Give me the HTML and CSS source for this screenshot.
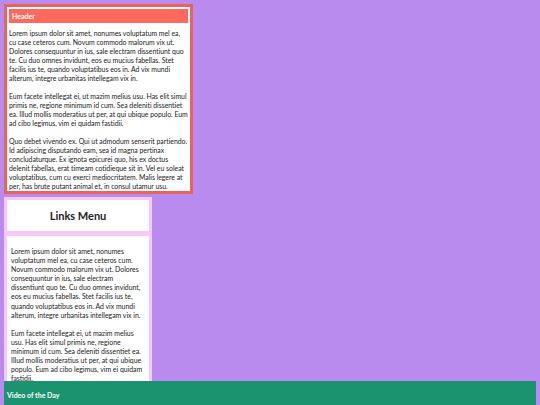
FILE: index.html
```html
<!DOCTYPE html>
<html>
<head>
<meta charset="utf-8">
<link rel="stylesheet" href="styles.css">
</head>
<body>
<div class="page">
  <section class="header-box">
    <div class="header-bar">Header</div>
    <p>Lorem ipsum dolor sit amet, nonumes voluptatum mel ea,<br>cu case ceteros cum. Novum commodo malorum vix ut.<br>Dolores consequuntur in ius, sale electram dissentiunt quo<br>te. Cu duo omnes invidunt, eos eu mucius fabellas. Stet<br>facilis ius te, quando voluptatibus eos in. Ad vix mundi<br>alterum, integre urbanitas intellegam vix in.</p>
    <p>Eum facete intellegat ei, ut mazim melius usu. Has elit simul<br>primis ne, regione minimum id cum. Sea deleniti dissentiet<br>ea. Illud mollis moderatius ut per, at qui ubique populo. Eum<br>ad cibo legimus, vim ei quidam fastidii.</p>
    <p>Quo debet vivendo ex. Qui ut admodum senserit partiendo.<br>Id adipiscing disputando eam, sea id magna pertinax<br>concludaturque. Ex ignota epicurei quo, his ex doctus<br>delenit fabellas, erat timeam cotidieque sit in. Vel eu soleat<br>voluptatibus, cum cu exerci mediocritatem. Malis legere at<br>per, has brute putant animal et, in consul utamur usu.</p>
  </section>
  <section class="links">
    <div class="links-head">Links Menu</div>
    <div class="links-body">
      <p>Lorem ipsum dolor sit amet, nonumes voluptatum mel ea, cu case ceteros cum. Novum commodo malorum vix ut. Dolores consequuntur in ius, sale electram dissentiunt quo te. Cu duo omnes invidunt, eos eu mucius fabellas. Stet facilis ius te, quando voluptatibus eos in. Ad vix mundi alterum, integre urbanitas intellegam vix in.</p>
      <p>Eum facete intellegat ei, ut mazim melius usu. Has elit simul primis ne, regione minimum id cum. Sea deleniti dissentiet ea. Illud mollis moderatius ut per, at qui ubique populo. Eum ad cibo legimus, vim ei quidam fastidii.</p>
    </div>
  </section>
  <footer class="footer">Video of the Day</footer>
</div>
</body>
</html>
```

FILE: styles.css
```css
html, body {
  margin: 0;
  padding: 0;
  background: #b98bee;
  overflow: hidden;
}
body {
  font-family: Lato, "Open Sans", sans-serif;
  color: #222;
}
.page {
  padding: 4px;
  display: flex;
  flex-direction: column;
}
.header-box {
  width: 189px;
  box-sizing: border-box;
  height: 190px;
  border: 3px solid #e8645a;
  background: #fff;
  padding: 2px 2px;
  overflow: hidden;
}
.header-bar {
  background: #fe6b5c;
  color: #fff;
  font-weight: bold;
  font-size: 7px;
  height: 14px;
  line-height: 14px;
  padding: 0 3px;
}
.header-box p {
  font-size: 6.9px;
  line-height: 9px;
  margin: 5.5px 0 0;
  white-space: nowrap;
  letter-spacing: -0.02px;
}
.header-box p + p {
  margin-top: 9px;
}
.links {
  margin-top: 3px;
  width: 148px;
  display: flex;
  flex-direction: column;
}
.links-head {
  box-sizing: border-box;
  height: 37px;
  border: 3px solid #f8c9f8;
  background: #fff;
  font-weight: bold;
  font-size: 11px;
  display: flex;
  align-items: center;
  justify-content: center;
}
.links-body {
  box-sizing: border-box;
  height: 147px;
  overflow: hidden;
  border: 3px solid #f8c9f8;
  border-top-width: 2px;
  border-bottom: 0;
  background: #fff;
  padding: 11px 4px 0;
}
.links-body p {
  font-size: 6.9px;
  line-height: 9.1px;
  margin: 0;
}
.links-body p + p {
  margin-top: 9px;
}
.footer {
  height: 30px;
  background: #1b936f;
  color: #fff;
  font-weight: bold;
  font-size: 7px;
  padding: 10px 3px 0;
  box-sizing: border-box;
}
```
